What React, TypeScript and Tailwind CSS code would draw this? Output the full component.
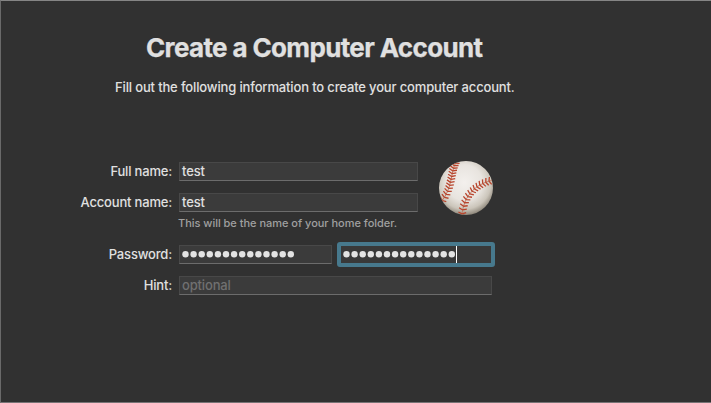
import React from "react";

type Point = [number, number];

function bezier(p: Point[], t: number): Point {
  const u = 1 - t;
  const w = [u * u * u, 3 * u * u * t, 3 * u * t * t, t * t * t];
  return [
    p.reduce((s, q, i) => s + q[0] * w[i], 0),
    p.reduce((s, q, i) => s + q[1] * w[i], 0),
  ];
}

// V-shaped stitches placed at even steps along a seam curve
function stitches(p: Point[], count: number): string {
  let d = "";
  for (let i = 0; i < count; i++) {
    const t = (i + 0.5) / count;
    const [x, y] = bezier(p, t);
    const [x2, y2] = bezier(p, t + 0.01);
    const len = Math.hypot(x2 - x, y2 - y);
    const dx = (x2 - x) / len;
    const dy = (y2 - y) / len;
    for (const s of [-1, 1]) {
      const ex = x - dx * 1.6 - dy * s * 3.9;
      const ey = y - dy * 1.6 + dx * s * 3.9;
      d += `M${x.toFixed(2)} ${y.toFixed(2)}L${ex.toFixed(2)} ${ey.toFixed(2)}`;
    }
  }
  return d;
}

const leftSeam: Point[] = [[17, 1], [11, 12], [14, 27], [2, 41]];
const rightSeam: Point[] = [[55, 19], [38, 22], [24, 34], [23, 55]];

function Baseball() {
  return (
    <svg className="size-[54px]" viewBox="0 0 54 54" aria-label="Baseball">
      <defs>
        <radialGradient id="leather" cx="0.47" cy="0.4" r="0.6">
          <stop offset="0" stopColor="#f3f0ed" />
          <stop offset="0.55" stopColor="#e8e4df" />
          <stop offset="0.82" stopColor="#cbc5ba" />
          <stop offset="1" stopColor="#8f887c" />
        </radialGradient>
        <clipPath id="ball"><circle cx="27" cy="27" r="27" /></clipPath>
      </defs>
      <g clipPath="url(#ball)" fill="none">
        <rect width="54" height="54" fill="url(#leather)" />
        <path d="M17 1C11 12 14 27 2 41M55 19C38 22 24 34 23 55" stroke="#bd7d68" strokeWidth="1" />
        <path d={stitches(leftSeam, 14)} stroke="#b9452d" strokeWidth="1.3" />
        <path d={stitches(rightSeam, 15)} stroke="#b9452d" strokeWidth="1.3" />
      </g>
    </svg>
  );
}

function Dots() {
  return (
    <svg className="h-[7px] w-[114px]" viewBox="0 0 114 7" aria-label="Hidden password">
      {Array.from({ length: 14 }, (_, i) => (
        <circle key={i} cx={3.5 + i * 8.1} cy="3.3" r="3.2" fill="#e3e3e3" />
      ))}
    </svg>
  );
}

function Label({ children }: { children: string }) {
  return <div className="w-[171px] shrink-0 text-right tracking-[-0.18px]">{children}</div>;
}

const field =
  "ml-[7px] flex h-[19px] items-center border border-[#484848] border-b-[#6c6c6c] bg-[#3b3b3b] tracking-[-0.15px]";

export default function App() {
  return (
    <div className="h-[403px] w-[711px] overflow-hidden whitespace-nowrap border-t border-b border-l border-t-[#858585] border-b-[#777375] border-l-[#6a6a6a] bg-[#313131] font-['Inter',sans-serif] text-[13px] font-medium leading-[19px] text-[#e0e0e0]">
      <h1 className="ml-[145px] mt-[31px] text-[26px] font-bold leading-8 tracking-[-0.64px] [-webkit-text-stroke:0.25px_#e0e0e0]">Create a Computer Account</h1>
      <p className="ml-[114px] mt-[14px] tracking-[-0.15px]">Fill out the following information to create your computer account.</p>
      <div className="mt-16 flex">
        <div>
          <div className="mt-[1px] flex">
            <Label>Full name:</Label>
            <div className={`${field} w-[239px] pl-[2px]`}>test</div>
          </div>
          <div className="mt-3 flex">
            <Label>Account name:</Label>
            <div className={`${field} w-[239px] pl-[2px]`}>test</div>
          </div>
          <p className="ml-[177px] mt-[3px] text-[11px] leading-4 tracking-[-0.02px] text-[#a0a0a0]">This will be the name of your home folder.</p>
        </div>
        <div className="ml-[21px]"><Baseball /></div>
      </div>
      <div className="mt-[14px] flex items-center">
        <Label>Password:</Label>
        <div className={`${field} w-[153px] pl-[2px]`}><Dots /></div>
        <div className="-my-[3px] ml-[5px] flex h-[25px] w-[158px] items-center rounded-[3px] border-4 border-[#47798d] bg-[#393939] pl-[2px]">
          <Dots />
          <span className="-ml-[1px] h-[17px] w-px bg-white" />
        </div>
      </div>
      <div className="mt-3 flex">
        <Label>Hint:</Label>
        <div className={`${field} w-[313px] pl-[2px] text-[#707070]`}>optional</div>
      </div>
    </div>
  );
}
